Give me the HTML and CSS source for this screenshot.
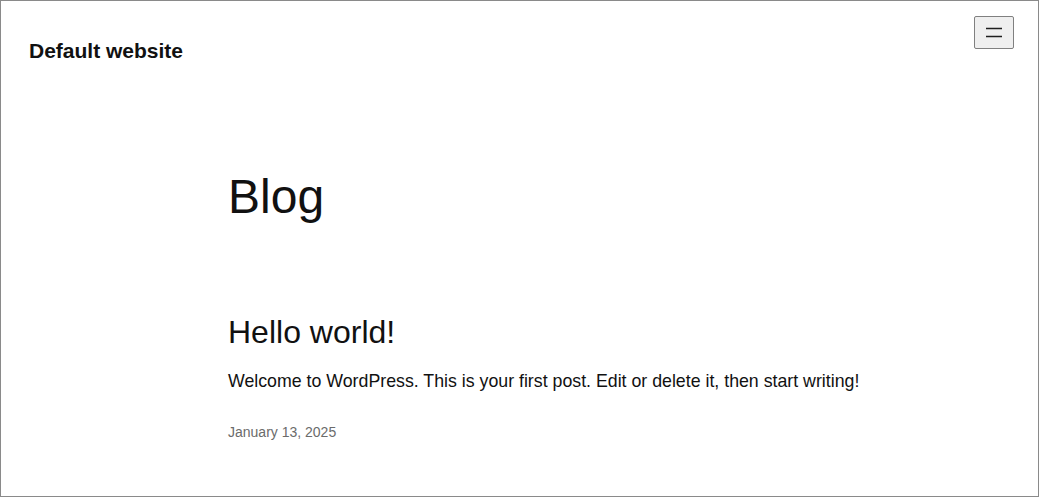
FILE: index.html
```html
<!DOCTYPE html>
<html lang="en">
<head>
<meta charset="utf-8">
<title>Blog – Default website</title>
<link rel="stylesheet" href="styles.css">
</head>
<body>
<div class="frame">
  <header class="site-header">
    <p class="site-title">Default website</p>
    <button class="menu-toggle" aria-label="Open menu">
      <svg width="24" height="24" viewBox="0 0 24 24" aria-hidden="true"><path d="M4 7.5h16M4 15.5h16" stroke="#1e1e1e" stroke-width="1.5" fill="none"/></svg>
    </button>
  </header>
  <main class="content">
    <h1 class="page-title">Blog</h1>
    <article class="post">
      <h2 class="post-title">Hello world!</h2>
      <p class="post-excerpt">Welcome to WordPress. This is your first post. Edit or delete it, then start writing!</p>
      <p class="post-date">January 13, 2025</p>
    </article>
  </main>
</div>
</body>
</html>
```

FILE: styles.css
```css
html, body {
  margin: 0;
  padding: 0;
  background: #fff;
}
body {
  font-family: "Liberation Sans", Arial, sans-serif;
  color: #111;
}
.frame {
  box-sizing: border-box;
  height: 497px;
  border: 1px solid #8a8a8a;
  overflow: hidden;
}
.site-header {
  display: flex;
  justify-content: space-between;
  align-items: flex-start;
  padding: 15px 24px 0 28px;
}
.site-title {
  margin: 22px 0 0;
  font-size: 21px;
  font-weight: 700;
  line-height: 1.2;
}
.menu-toggle {
  width: 40px;
  height: 33px;
  padding: 0;
  display: flex;
  align-items: center;
  justify-content: center;
  background: #efefef;
  border: 1px solid #808080;
  border-radius: 2px;
}
.content {
  padding-left: 227px;
}
.page-title {
  margin: 105px 0 0;
  font-size: 48px;
  font-weight: 400;
  line-height: 1.2;
}
.post-title {
  margin: 87px 0 0;
  font-size: 32px;
  font-weight: 400;
  line-height: 1.2;
}
.post-excerpt {
  margin: 17px 0 0;
  font-size: 17.75px;
  line-height: 1.5;
}
.post-date {
  margin: 27px 0 0;
  font-size: 14px;
  color: #6b6b6b;
  line-height: 1.5;
}
```
